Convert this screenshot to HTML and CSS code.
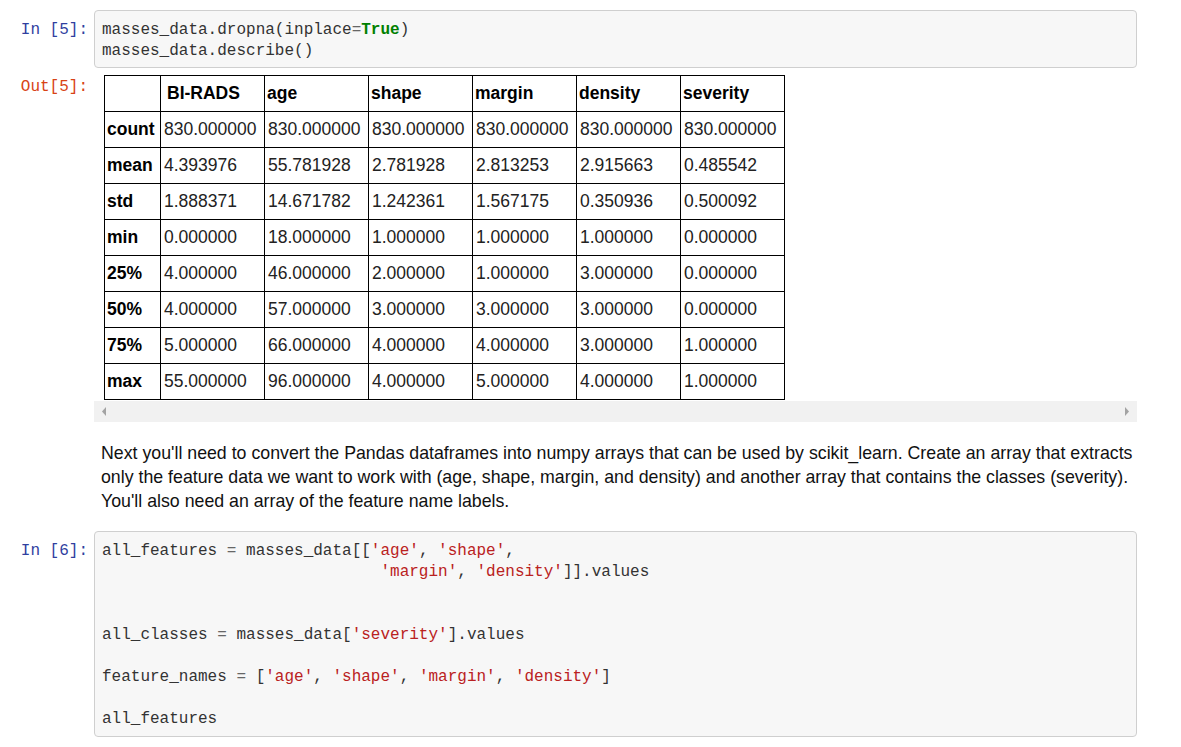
FILE: index.html
```html
<!DOCTYPE html>
<html>
<head>
<meta charset="utf-8">
<link rel="stylesheet" href="styles.css">
</head>
<body>
<div class="notebook">
  <div class="cell">
    <div class="prompt in">In&nbsp;[5]:</div>
    <div class="input-area">
      <div class="code">
        <div class="ln">masses_data.dropna(inplace<span class="op">=</span><span class="kw">True</span>)</div>
        <div class="ln">masses_data.describe()</div>
      </div>
    </div>
  </div>

  <div class="cell output-cell">
    <div class="prompt out">Out[5]:</div>
    <div class="output-area">
      <div class="table-wrap">
        <table class="df">
          <colgroup><col class="c-idx"><col class="c-val"><col class="c-val"><col class="c-val"><col class="c-val"><col class="c-val"><col class="c-val"></colgroup>
          <thead>
            <tr><th></th><th>BI-RADS</th><th>age</th><th>shape</th><th>margin</th><th>density</th><th>severity</th></tr>
          </thead>
          <tbody>
            <tr><th>count</th><td>830.000000</td><td>830.000000</td><td>830.000000</td><td>830.000000</td><td>830.000000</td><td>830.000000</td></tr>
            <tr><th>mean</th><td>4.393976</td><td>55.781928</td><td>2.781928</td><td>2.813253</td><td>2.915663</td><td>0.485542</td></tr>
            <tr><th>std</th><td>1.888371</td><td>14.671782</td><td>1.242361</td><td>1.567175</td><td>0.350936</td><td>0.500092</td></tr>
            <tr><th>min</th><td>0.000000</td><td>18.000000</td><td>1.000000</td><td>1.000000</td><td>1.000000</td><td>0.000000</td></tr>
            <tr><th>25%</th><td>4.000000</td><td>46.000000</td><td>2.000000</td><td>1.000000</td><td>3.000000</td><td>0.000000</td></tr>
            <tr><th>50%</th><td>4.000000</td><td>57.000000</td><td>3.000000</td><td>3.000000</td><td>3.000000</td><td>0.000000</td></tr>
            <tr><th>75%</th><td>5.000000</td><td>66.000000</td><td>4.000000</td><td>4.000000</td><td>3.000000</td><td>1.000000</td></tr>
            <tr><th>max</th><td>55.000000</td><td>96.000000</td><td>4.000000</td><td>5.000000</td><td>4.000000</td><td>1.000000</td></tr>
          </tbody>
        </table>
      </div>
      <div class="hscroll">
        <svg class="arrow" width="5" height="9" viewBox="0 0 5 9"><path d="M4 0 L4 9 L0 4.5 Z" fill="#a3a3a3"/></svg>
        <svg class="arrow" width="5" height="9" viewBox="0 0 5 9"><path d="M1 0 L1 9 L5 4.5 Z" fill="#a3a3a3"/></svg>
      </div>
    </div>
  </div>

  <div class="cell md-cell">
    <div class="prompt"></div>
    <div class="markdown">
      <p>Next you'll need to convert the Pandas dataframes into numpy arrays that can be used by scikit_learn. Create an array that extracts only the feature data we want to work with (age, shape, margin, and density) and another array that contains the classes (severity). You'll also need an array of the feature name labels.</p>
    </div>
  </div>

  <div class="cell">
    <div class="prompt in">In&nbsp;[6]:</div>
    <div class="input-area last">
      <div class="code">
        <div class="ln">all_features <span class="op">=</span> masses_data[[<span class="str">'age'</span>, <span class="str">'shape'</span>,</div>
        <div class="ln">                             <span class="str">'margin'</span>, <span class="str">'density'</span>]].values</div>
        <div class="ln blank"></div>
        <div class="ln blank"></div>
        <div class="ln">all_classes <span class="op">=</span> masses_data[<span class="str">'severity'</span>].values</div>
        <div class="ln blank"></div>
        <div class="ln">feature_names <span class="op">=</span> [<span class="str">'age'</span>, <span class="str">'shape'</span>, <span class="str">'margin'</span>, <span class="str">'density'</span>]</div>
        <div class="ln blank"></div>
        <div class="ln">all_features</div>
      </div>
    </div>
  </div>
</div>
</body>
</html>
```

FILE: styles.css
```css
html, body {
  margin: 0;
  padding: 0;
  background: #ffffff;
}

.notebook {
  width: 1137px;
  padding-top: 10px;
  font-family: "Liberation Sans", Arial, sans-serif;
  color: #000;
}

.cell {
  display: flex;
  align-items: flex-start;
}

.prompt {
  flex: 0 0 94px;
  box-sizing: border-box;
  padding-right: 6px;
  text-align: right;
  font-family: "Liberation Mono", "DejaVu Sans Mono", monospace;
  font-size: 16px;
  line-height: 21px;
  white-space: nowrap;
}

.prompt.in {
  color: #303f9f;
  padding-top: 10px;
}

.prompt.out {
  color: #d84315;
  padding-top: 2px;
}

.input-area {
  flex: 1;
  min-width: 0;
  background: #f7f7f7;
  border: 1px solid #cfcfcf;
  border-radius: 4px;
  padding: 9px 7px 5px 7px;
}

.input-area.last {
  padding-bottom: 6px;
}

.code {
  font-family: "Liberation Mono", "DejaVu Sans Mono", monospace;
  font-size: 16px;
  line-height: 21px;
  color: #333;
}

.code .ln {
  white-space: pre;
  height: 21px;
}

.code .kw {
  color: #008000;
  font-weight: bold;
}

.code .str {
  color: #ba2121;
}

.code .op {
  color: #666;
}

.output-cell {
  margin-top: 7px;
}

.output-area {
  flex: 1;
  min-width: 0;
}

.table-wrap {
  padding-left: 10px;
}

.df {
  border-collapse: collapse;
  table-layout: fixed;
  width: 681px;
  font-size: 17.5px;
  line-height: 21px;
  color: #000;
}

.df col.c-idx { width: 56px; }
.df col.c-val { width: 104px; }

.df th,
.df td {
  border: 1px solid #000;
  padding: 7px 3px 7px 2px;
  text-align: left;
  white-space: nowrap;
  overflow: hidden;
  vertical-align: middle;
}

.df td {
  font-weight: normal;
  color: #222;
}

.df th {
  font-weight: bold;
}

.df thead th:nth-child(2) {
  padding-left: 6px;
}

.df tbody td {
  padding-left: 3px;
}

.hscroll {
  margin-top: 1px;
  height: 21px;
  background: #f1f1f1;
  display: flex;
  align-items: center;
  justify-content: space-between;
  padding: 0 8px 0 8px;
}

.md-cell {
  margin-top: 19px;
}

.markdown {
  flex: 1;
  min-width: 0;
  padding-left: 7px;
}

.markdown p {
  margin: 0;
  font-size: 17.75px;
  line-height: 24px;
  color: #111;
}

.md-cell + .cell {
  margin-top: 18px;
}
```
